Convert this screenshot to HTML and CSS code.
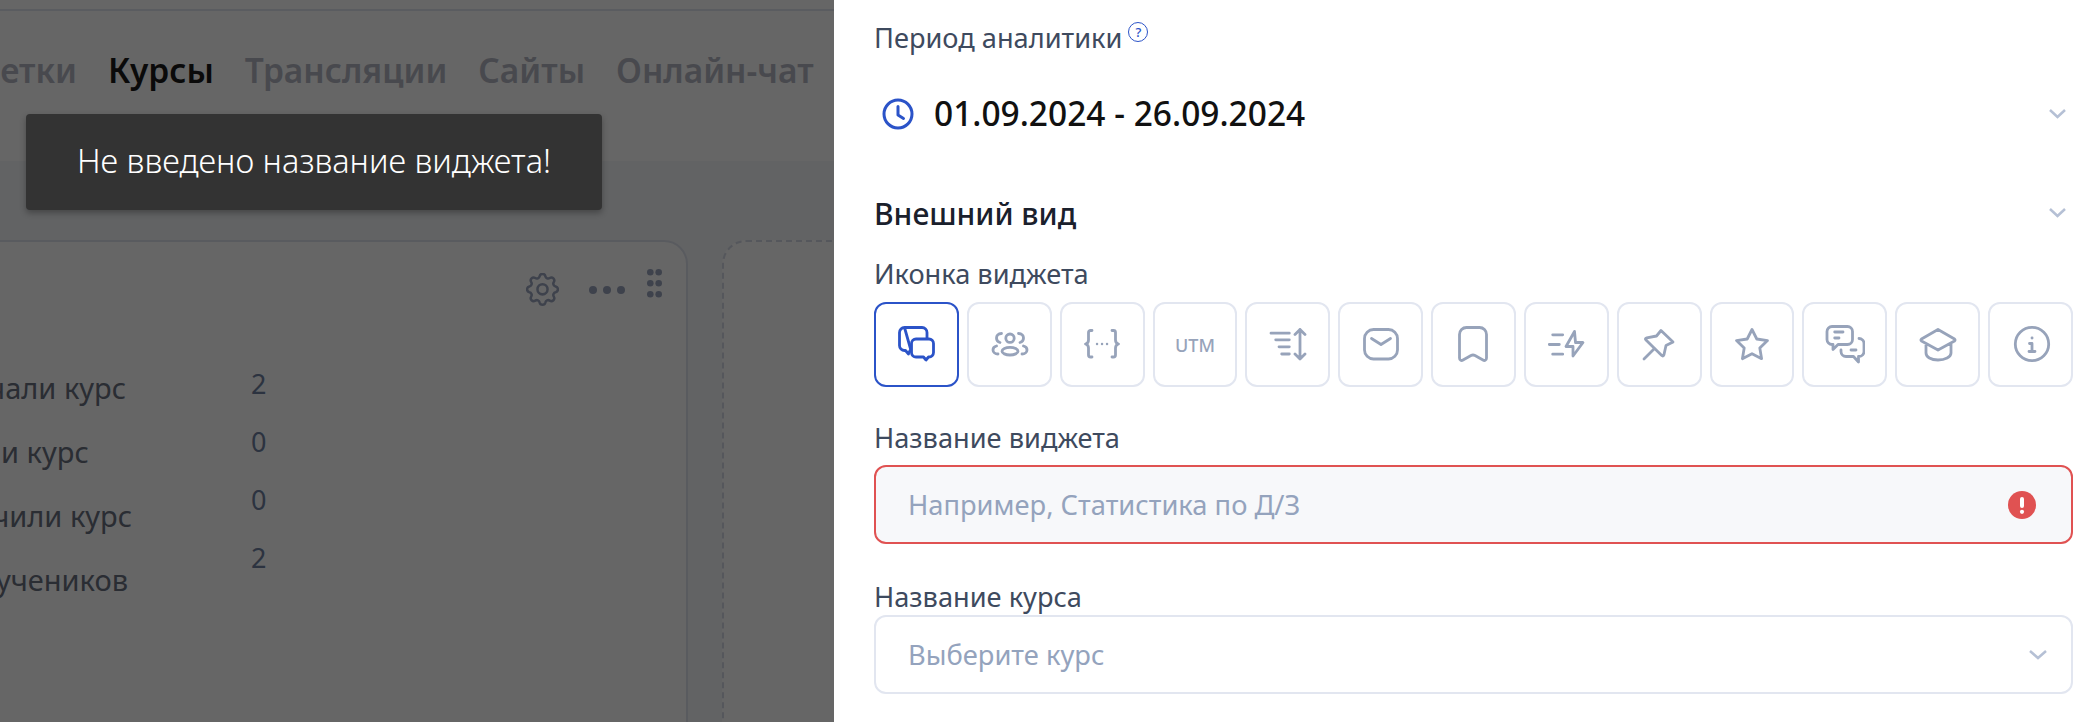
FILE: index.html
```html
<!DOCTYPE html>
<html lang="ru">
<head>
<meta charset="utf-8">
<title>Виджет</title>
<link rel="stylesheet" href="styles.css">
</head>
<body>
<div class="page">
  <div class="topbar"></div>
  <nav class="tabs">
    <span class="tab">Заметки</span>
    <span class="tab tab-active">Курсы</span>
    <span class="tab">Трансляции</span>
    <span class="tab">Сайты</span>
    <span class="tab">Онлайн-чат</span>
  </nav>
  <main class="board">
    <section class="card">
      <div class="card-tools">
        <svg class="gear" width="33" height="33" viewBox="2.200 1 19.600 19.600" fill="none" stroke="#9ba5be" stroke-width="1.500" stroke-linecap="round" stroke-linejoin="round"><path d="M10.300 2.900c.4-1.800 3-1.800 3.400 0a1.700 1.700 0 0 0 2.600 1.100c1.600-1 3.400.8 2.400 2.400a1.700 1.700 0 0 0 1.100 2.600c1.800.4 1.800 3 0 3.400a1.700 1.700 0 0 0-1.100 2.600c1 1.600-.8 3.400-2.400 2.400a1.700 1.700 0 0 0-2.600 1.100c-.4 1.800-3 1.800-3.400 0a1.700 1.700 0 0 0-2.600-1.100c-1.600 1-3.400-.8-2.400-2.400A1.700 1.700 0 0 0 4.200 12.400c-1.800-.4-1.800-3 0-3.400a1.700 1.700 0 0 0 1.100-2.600c-1-1.600.8-3.400 2.400-2.400a1.700 1.700 0 0 0 2.600-1.100z"/><circle cx="12" cy="10.700" r="3"/></svg>
        <svg class="dots" width="36" height="8" viewBox="0 0 36 8" fill="#9ba5be"><circle cx="4" cy="4" r="4"/><circle cx="18" cy="4" r="4"/><circle cx="32" cy="4" r="4"/></svg>
        <svg class="grip" width="15" height="29" viewBox="0 0 15 29" fill="#9ba5be"><circle cx="3.300" cy="3.300" r="3.300"/><circle cx="11.700" cy="3.300" r="3.300"/><circle cx="3.300" cy="14.300" r="3.300"/><circle cx="11.700" cy="14.300" r="3.300"/><circle cx="3.300" cy="25.300" r="3.300"/><circle cx="11.700" cy="25.300" r="3.300"/></svg>
      </div>
      <div class="stats">
        <div class="stat-labels">
          <span class="stat-a">Начали курс</span>
          <span class="stat-b">Прошли курс</span>
          <span>Закончили курс</span>
          <span class="stat-d">Всего учеников</span>
        </div>
        <div class="stat-values">
          <span>2</span>
          <span>0</span>
          <span>0</span>
          <span>2</span>
        </div>
      </div>
    </section>
    <section class="card-empty"></section>
  </main>
</div>

<div class="overlay"></div>

<div class="toast">Не введено название виджета!</div>

<aside class="drawer">
  <div class="field-label">Период аналитики<span class="help">?</span></div>
  <div class="date-row">
    <svg width="32" height="32" viewBox="0 0 32 32" fill="none" stroke="#2b53c8" stroke-width="3" stroke-linecap="round" stroke-linejoin="round"><circle cx="16" cy="16" r="14"/><path d="M16 8.500V17l5.500 3.500"/></svg>
    <span class="date-text">01.09.2024 - 26.09.2024</span>
    <svg class="chev" width="17" height="10" viewBox="0 0 17 10" fill="none" stroke="#b5c0d5" stroke-width="2.500"><path d="M1 1l7.500 7L16 1"/></svg>
  </div>
  <div class="section-row">
    <h2 class="section-title">Внешний вид</h2>
    <svg class="chev" width="17" height="10" viewBox="0 0 17 10" fill="none" stroke="#b5c0d5" stroke-width="2.500"><path d="M1 1l7.500 7L16 1"/></svg>
  </div>
  <div class="field-label icons-label">Иконка виджета</div>
  <div class="icon-grid">
    <button class="icon-btn icon-btn-active"><svg width="40" height="40" viewBox="-1 0 40 40" fill="none" stroke="#2b53c8" stroke-width="2.800" stroke-linecap="round" stroke-linejoin="round"><path d="M7.500 2.500H25a5 5 0 0 1 5 5V14M14 25.500h-1l-1.500 3.500-3-3.500h-1a5 5 0 0 1-5-5V7.500a5 5 0 0 1 5-5z"/><path fill="#fff" d="M19 14h13a4.500 4.500 0 0 1 4.500 4.500v9a4.500 4.500 0 0 1-4.500 4.500h-.5l-2.500 3-2.500-3H19a4.500 4.500 0 0 1-4.500-4.500v-9A4.500 4.500 0 0 1 19 14z"/></svg></button>
    <button class="icon-btn"><svg width="40" height="40" viewBox="0 0 40 40" fill="none" stroke="#97a3ba" stroke-width="2.800" stroke-linecap="round"><circle cx="21" cy="13.200" r="4.200"/><ellipse cx="21" cy="26.200" rx="8" ry="3.800"/><path d="M12.500 8.500C9 8.500 7.500 11 7.500 13s1.500 4 3.500 4.500M29.500 8.500c3.500 0 5 2.500 5 4.500s-1.500 4-3.500 4.500M7.500 21C5 21.500 4 23.500 4 25c0 2 2 4 5 4M34.500 21c2.500.5 3.500 2.500 3.500 4 0 2-2 4-5 4"/></svg></button>
    <button class="icon-btn"><svg width="40" height="40" viewBox="0 0 40 40" fill="none" stroke="#97a3ba" stroke-width="2.800" stroke-linecap="round" stroke-linejoin="round"><path d="M10 5.500H8.500a2 2 0 0 0-2 2V15c0 2-1 3.500-3 4 2 .5 3 2 3 4v7a2 2 0 0 0 2 2H10M30 5.500h1.500a2 2 0 0 1 2 2V15c0 2 1 3.500 3 4-2 .5-3 2-3 4v7a2 2 0 0 1-2 2H30"/><path stroke-width="2.400" d="M15 19h.1M20 19h.1M25 19h.1"/></svg></button>
    <button class="icon-btn"><span class="utm">UTM</span></button>
    <button class="icon-btn"><svg width="40" height="40" viewBox="0 0 40 40" fill="none" stroke="#97a3ba" stroke-width="2.800" stroke-linecap="round" stroke-linejoin="round"><path d="M3 8.200h18.300M7.700 14.800h13.600M11 21.800h10.300M13.700 29h7.600M32 4.500V34M27 9.500l5-5 5 5M27 29l5 5 5-5"/></svg></button>
    <button class="icon-btn"><svg width="40" height="40" viewBox="0 0 40 40" fill="none" stroke="#97a3ba" stroke-width="2.800" stroke-linecap="round" stroke-linejoin="round"><rect x="3.500" y="4.500" width="33" height="29.500" rx="9"/><path d="M10.500 13.500l9.500 6 9.500-6"/></svg></button>
    <button class="icon-btn"><svg width="40" height="40" viewBox="0 0 40 40" fill="none" stroke="#97a3ba" stroke-width="2.800" stroke-linecap="round" stroke-linejoin="round"><path d="M6.500 9.500a7 7 0 0 1 7-7h13a7 7 0 0 1 7 7V33c0 2.500-2 3-3.500 2l-8-4.500c-1.500-.8-2.500-.8-4 0l-8 4.500C8.500 36 6.500 35.500 6.500 33z"/></svg></button>
    <button class="icon-btn"><svg width="40" height="40" viewBox="0 0 40 40" fill="none" stroke="#97a3ba" stroke-width="2.800" stroke-linecap="round" stroke-linejoin="round"><path d="M6.700 9.800h10M3.300 19.500h10M6.700 29.200h10M28.500 6.500L20 21.500h7V31l10-13.500h-7.500z"/></svg></button>
    <button class="icon-btn"><svg width="40" height="40" viewBox="0 0 40 40" fill="none" stroke="#97a3ba" stroke-width="2.800" stroke-linecap="round" stroke-linejoin="round"><path d="M22 5.500l12 11.500-7 3.500-2 9q-.7 2.500-2.500.8L7 15q-1.500-1.500.8-2.200l9.700-1.800zM5 34l9.500-9.500"/></svg></button>
    <button class="icon-btn"><svg width="40" height="40" viewBox="0 0 40 40" fill="none" stroke="#97a3ba" stroke-width="2.800" stroke-linecap="round" stroke-linejoin="round"><path d="M20 4.500l4.800 9.500 10.700 1.600-7.700 7.500 1.800 10.600-9.600-5-9.600 5 1.800-10.600-7.700-7.500L15.200 14z"/></svg></button>
    <button class="icon-btn"><svg width="40" height="40" viewBox="0 0 40 40" fill="none" stroke="#97a3ba" stroke-width="2.800" stroke-linecap="round" stroke-linejoin="round"><path d="M7 1.500h15.500a5 5 0 0 1 5 5v8a5 5 0 0 1-5 5H13l-5 5v-5H7a5 5 0 0 1-5-5v-8a5 5 0 0 1 5-5z"/><path d="M34 13.500a5 5 0 0 1 5 5V26a5 5 0 0 1-5 5.500h-.5V37l-5-5.500H21a5 5 0 0 1-5-5V25M9.700 7H18M9.700 13H14M26 25h5"/></svg></button>
    <button class="icon-btn"><svg width="40" height="40" viewBox="0 0 40 40" fill="none" stroke="#97a3ba" stroke-width="2.800" stroke-linecap="round" stroke-linejoin="round"><path d="M20 4.500L36.500 14q1 1 0 2L20 25 3.500 16q-1-1 0-2zM8 18.500V28c0 4 5 7 12 7s13-3 13-7v-9.500"/></svg></button>
    <button class="icon-btn"><svg width="40" height="40" viewBox="0 0 40 40" fill="none" stroke="#97a3ba" stroke-width="2.800" stroke-linecap="round" stroke-linejoin="round"><circle cx="21" cy="19" r="16.700"/><path d="M18.500 18.500H21v8M18 26.500h6M21 13h.1"/></svg></button>
  </div>
  <div class="field-label name-label">Название виджета</div>
  <div class="input input-error">
    <span class="placeholder">Например, Статистика по Д/З</span>
    <svg class="err" width="28" height="28" viewBox="0 0 28 28"><circle cx="14" cy="14" r="14" fill="#e05252"/><rect x="12" y="6" width="4" height="11" rx="2" fill="#fff"/><circle cx="14" cy="20.800" r="2.100" fill="#fff"/></svg>
  </div>
  <div class="field-label course-label">Название курса</div>
  <div class="input">
    <span class="placeholder">Выберите курс</span>
    <svg class="chev-select" width="18" height="10" viewBox="0 0 18 10" fill="none" stroke="#b5c0d5" stroke-width="2.500"><path d="M1 1l8 7 8-7"/></svg>
  </div>
</aside>
</body>
</html>
```
FILE: styles.css
```css
* { box-sizing: border-box; }
html, body { margin: 0; height: 100%; }
body {
  position: relative;
  width: 2095px;
  height: 722px;
  overflow: hidden;
  background: #fff;
  font-family: "Noto Sans", "Open Sans", sans-serif;
}
.page { display: flex; flex-direction: column; height: 722px; overflow: hidden; }
.topbar { height: 11px; flex: none; border-bottom: 2px solid #e2e6f0; }
.tabs {
  flex: none;
  height: 150px;
  display: flex;
  gap: 31px;
  padding-top: 36px;
  margin-left: -66px;
  font-size: 33.500px;
  line-height: 46px;
  font-weight: 600;
  color: #b4b6c2;
  white-space: nowrap;
}
.tab-active { color: #1a1a1a; }
.board {
  flex: 1;
  display: flex;
  gap: 34px;
  padding-top: 79px;
  background: #f5f7fa;
  overflow: hidden;
}
.card {
  flex: none;
  width: 788px;
  height: 700px;
  margin-left: -100px;
  background: #fff;
  border: 2px solid #dfe3ee;
  border-radius: 24px;
  padding: 29px 24px 0 0;
}
.card-tools { display: flex; justify-content: flex-end; align-items: center; height: 36px; }
.dots { margin-left: 30px; margin-top: 2px; }
.grip { margin-left: 22px; align-self: flex-start; margin-top: -2px; }
.stats { display: flex; margin-top: 60px; color: #69707f; font-size: 29px; }
.stat-labels {
  display: flex;
  flex-direction: column;
  gap: 30px;
  width: 230px;
  margin-top: 4px;
  line-height: 34px;
  text-align: right;
  white-space: nowrap;
}
.stat-a { margin-right: 6px; }
.stat-b { margin-right: 45px; }
.stat-d { margin-right: 4px; }
.stat-values {
  display: flex;
  flex-direction: column;
  gap: 24px;
  margin-left: 119px;
  line-height: 34px;
  font-size: 27px;
  color: #6e80a0;
}
.card-empty {
  flex: 1;
  height: 700px;
  background: #fff;
  border: 2px dashed #d5d9e6;
  border-radius: 24px;
}
.overlay { position: absolute; inset: 0; background: rgba(0, 0, 0, 0.6); }
.toast {
  position: absolute;
  left: 26px;
  top: 114px;
  width: 576px;
  height: 96px;
  padding-bottom: 4px;
  display: flex;
  align-items: center;
  justify-content: center;
  background: #333;
  color: #fff;
  border-radius: 4px;
  box-shadow: 0 3px 6px rgba(0, 0, 0, 0.3);
  font-size: 32.600px;
  font-weight: 300;
}
.drawer {
  position: absolute;
  top: 0;
  right: 0;
  bottom: 0;
  width: 1261px;
  padding: 22px 22px 0 40px;
  background: #fff;
  display: flex;
  flex-direction: column;
}
.field-label {
  flex: none;
  display: flex;
  align-items: flex-start;
  height: 32px;
  font-size: 27.200px;
  line-height: 32px;
  color: #3e4a5e;
}
.help {
  display: flex;
  align-items: center;
  justify-content: center;
  width: 20px;
  height: 20px;
  margin: 0 0 0 6px;
  border: 1.800px solid #2b53c8;
  border-radius: 50%;
  color: #2b53c8;
  font-size: 13px;
  font-weight: 500;
  line-height: 1;
}
.date-row { display: flex; align-items: center; height: 40px; margin-top: 40px; padding-left: 8px; flex: none; }
.date-text { margin: 0 0 2px 20px; font-size: 33.500px; font-weight: 500; color: #111; flex: 1; }
.chev { margin-right: 7px; }
.section-row { display: flex; align-items: center; justify-content: space-between; height: 40px; margin-top: 59px; flex: none; }
.section-title { margin: 0; font-size: 30px; font-weight: 500; color: #1a202c; }
.icons-label { margin-top: 25px; }
.icon-grid { display: flex; gap: 8px; margin-top: 12px; flex: none; }
.icon-btn {
  flex: 1 1 0;
  height: 85px;
  display: flex;
  align-items: center;
  justify-content: center;
  padding: 0;
  background: #fff;
  border: 2px solid #e2e6f0;
  border-radius: 12px;
}
.icon-btn-active { border-color: #2b53c8; }
.utm { font-family: "Noto Sans", sans-serif; font-size: 18px; font-weight: 500; color: #97a3ba; }
.name-label { margin-top: 35px; }
.course-label { margin-top: 37px; }
.input {
  flex: none;
  height: 79px;
  margin-top: 11px;
  display: flex;
  align-items: center;
  justify-content: space-between;
  padding: 0 24px 0 32px;
  background: #fff;
  border: 2px solid #e2e6f0;
  border-radius: 12px;
}
.course-label + .input { margin-top: 2px; }
.input-error { background: #f7f8fa; border-color: #e05252; padding-right: 35px; }
.placeholder { font-size: 27.300px; color: #94a3bd; }
```
